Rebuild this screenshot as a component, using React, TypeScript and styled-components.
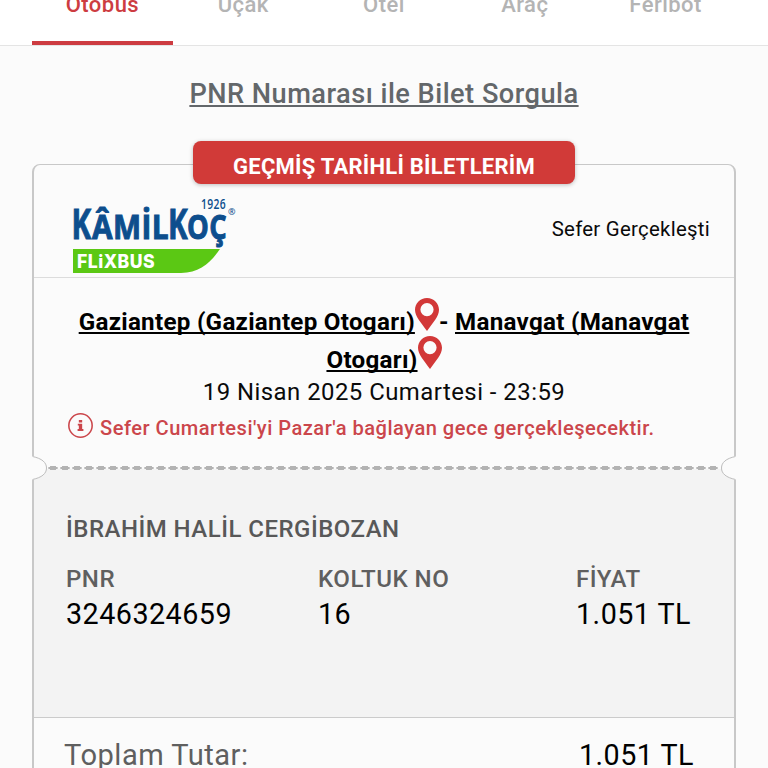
import React from 'react';
import styled, { createGlobalStyle } from 'styled-components';

const tabs = ['Otobüs', 'Uçak', 'Otel', 'Araç', 'Feribot'];

const PinIcon = () => (
  <StyledPin viewBox="0 0 24 33">
    <path
      fillRule="evenodd"
      d="M12 0C5.2 0 0 5.2 0 11.8C0 18.5 6 24.5 12 33C18 24.5 24 18.5 24 11.8C24 5.2 18.8 0 12 0ZM12 5A6.6 6.6 0 1 1 12 18.2A6.6 6.6 0 1 1 12 5Z"
    />
  </StyledPin>
);

const InfoIcon = () => (
  <StyledInfo viewBox="0 0 24 24">
    <circle cx="12" cy="12" r="11.2" />
    <path d="M10.4 6.600H13.600V9H10.400ZM9.400 10.200H13.600V15.400H14.800V17.200H9.200V15.400H10.400V11.900H9.400Z" />
  </StyledInfo>
);

const Logo = () => (
  <StyledLogo viewBox="0 0 164 78">
    <g fill="#0d4e8d" stroke="#0d4e8d" fontFamily="'Open Sans', sans-serif" fontWeight="700">
      <g strokeWidth="1">
        <text x="-1.500" y="43" fontSize="41" textLength="20" lengthAdjust="spacingAndGlyphs">K</text>
        <text x="19" y="43" fontSize="34" textLength="77" lengthAdjust="spacingAndGlyphs">ÂMİL</text>
        <text x="95" y="43" fontSize="41" textLength="20" lengthAdjust="spacingAndGlyphs">K</text>
        <text x="114" y="43" fontSize="34" textLength="40" lengthAdjust="spacingAndGlyphs">OÇ</text>
      </g>
      <text x="128" y="12.500" fontSize="14.500" fontWeight="600" strokeWidth="0" textLength="25" lengthAdjust="spacingAndGlyphs">1926</text>
      <text x="155" y="18.500" fontSize="9" fontWeight="600" strokeWidth="0">®</text>
    </g>
    <path fill="#5bc814" d="M0 53H147C138 66 127 77 108 77H0Z" />
    <text x="4" y="71.500" fill="#fff" fontFamily="Inter, sans-serif" fontWeight="800" fontSize="18.500" textLength="78" lengthAdjust="spacingAndGlyphs">FLiXBUS</text>
  </StyledLogo>
);

const Notch = ({ side }: { side: 'left' | 'right' }) => (
  <StyledNotch $side={side} viewBox="0 0 16 24">
    <path d="M0 0.500H1.500C10 2.500 14.500 6.500 14.500 12C14.500 17.500 10 21.500 1.500 23.500H0Z" fill="#fbfbfb" />
    <path d="M0.500 0.500C10 2.500 14.500 6.500 14.500 12C14.500 17.500 10 21.500 0.500 23.500" fill="none" stroke="#bdbdbd" />
  </StyledNotch>
);

const App = () => (
  <Page>
    <GlobalStyle />
    <TabBar>
      {tabs.map((tab, index) => (
        <Tab key={tab} $active={index === 0}>
          {tab}
        </Tab>
      ))}
    </TabBar>
    <PnrLink>PNR Numarası ile Bilet Sorgula</PnrLink>
    <Ticket>
      <Badge>GEÇMİŞ TARİHLİ BİLETLERİM</Badge>
      <TicketHeader>
        <Logo />
        <Status>Sefer Gerçekleşti</Status>
      </TicketHeader>
      <Journey>
        <Route>
          <u>Gaziantep (Gaziantep Otogarı)</u>
          <PinIcon />- <u>Manavgat (Manavgat</u>
          <br />
          <u>Otogarı)</u>
          <PinIcon />
        </Route>
        <DateLine>19 Nisan 2025 Cumartesi - 23:59</DateLine>
        <Warning>
          <InfoIcon />
          <span>Sefer Cumartesi'yi Pazar'a bağlayan gece gerçekleşecektir.</span>
        </Warning>
      </Journey>
      <Tear>
        <Notch side="left" />
        <Dashes />
        <Notch side="right" />
      </Tear>
      <Passenger>
        <Name>İBRAHİM HALİL CERGİBOZAN</Name>
        <Details>
          <Field>
            <Label>PNR</Label>
            <Value>3246324659</Value>
          </Field>
          <Field>
            <Label>KOLTUK NO</Label>
            <Value>16</Value>
          </Field>
          <Field>
            <Label>FİYAT</Label>
            <Value>1.051 TL</Value>
          </Field>
        </Details>
      </Passenger>
      <Total>
        <TotalLabel>Toplam Tutar:</TotalLabel>
        <Value>1.051 TL</Value>
      </Total>
    </Ticket>
  </Page>
);

export default App;

// css

const GlobalStyle = createGlobalStyle`
  * {
    box-sizing: border-box;
  }

  body {
    margin: 0;
    overflow: hidden;

    background: #fbfbfb;

    font-family: Roboto, sans-serif;
  }
`;

const Page = styled.div`
  height: 768px;
  overflow: hidden;

  color: #0a0a0a;
  letter-spacing: 0.03em;
`;

const TabBar = styled.nav`
  display: grid;
  grid-template-columns: repeat(5, 1fr);
  height: 46px;
  border-bottom: 1px solid #e4e4e4;
  padding: 0 32px;

  background: #fff;
`;

const Tab = styled.div<{ $active: boolean }>`
  height: 45px;
  border-bottom: 4px solid ${({ $active }) => ($active ? '#cd3c41' : 'transparent')};

  color: ${({ $active }) => ($active ? '#cd3c41' : '#b4b4b4')};
  font-weight: 500;
  font-size: 22px;
  line-height: 10px;
  text-align: center;
`;

const PnrLink = styled.div`
  margin-top: 32px;

  color: #63676a;
  font-weight: 500;
  font-size: 27.2px;
  line-height: 32px;
  text-align: center;
  text-decoration: underline;
  text-decoration-thickness: 1.5px;
  text-underline-offset: 2px;
  text-decoration-skip-ink: none;
`;

const Ticket = styled.section`
  position: relative;
  height: 700px;
  margin: 54px 32px 0;
  border: solid #c8c8c8;
  border-width: 1px 2px;
  border-radius: 8px;
`;

const Badge = styled.div`
  position: absolute;
  top: -24px;
  left: 159px;
  width: 382px;
  height: 43px;
  border-radius: 8px;
  box-shadow: 0 1px 4px rgba(0, 0, 0, 0.25);

  background: #d13a38;

  color: #fff;
  font-weight: 700;
  font-size: 22px;
  line-height: 52px;
  letter-spacing: 0.25px;
  text-align: center;
`;

const TicketHeader = styled.header`
  display: flex;
  justify-content: space-between;
  height: 113px;
  border-bottom: 1px solid #dcdcdc;
  padding: 31px 24px 0 39px;
`;

const Status = styled.span`
  margin-top: 20px;

  font-size: 20.4px;
  line-height: 26px;
  letter-spacing: 0.27px;
`;

const Journey = styled.div`
  height: 178px;
  padding: 25px 0 0;

  text-align: center;
`;

const Route = styled.div`
  color: #000;
  font-weight: 700;
  font-size: 24.2px;
  line-height: 38px;
  letter-spacing: 0.27px;

  u {
    text-decoration-thickness: 1.5px;
    text-underline-offset: 2px;
    text-decoration-skip-ink: none;
  }
`;

const DateLine = styled.div`
  margin-top: -1px;

  font-size: 23.9px;
  line-height: 28px;
`;

const Warning = styled.div`
  display: flex;
  gap: 7px;
  margin-top: 8px;
  padding-left: 34px;

  color: #cb464b;
  font-weight: 500;
  font-size: 20.1px;
  line-height: 29px;
  white-space: nowrap;
`;

const Tear = styled.div`
  display: flex;
  align-items: center;
  height: 24px;
  margin: 0 -2px;

  background: linear-gradient(#fbfbfb 13px, #f3f3f3 13px);
`;

const Dashes = styled.div`
  flex: 1;
  height: 4px;

  background: radial-gradient(ellipse 5px 2px at 6px 2px, #b3b3b3 90%, transparent) -1px 0 / 12px 4px;
`;

const Passenger = styled.div`
  height: 238px;
  border-bottom: 1px solid #cbcbcb;
  padding: 34px 32px 0;

  background: #f3f3f3;
`;

const Name = styled.div`
  color: #585858;
  font-weight: 500;
  font-size: 24px;
  line-height: 30px;
`;

const Details = styled.div`
  display: grid;
  grid-template-columns: 252px 258px auto;
  margin-top: 20px;
`;

const Field = styled.div`
  display: grid;
  justify-items: start;
`;

const Label = styled.div`
  color: #5f5f5f;
  font-weight: 500;
  font-size: 24.1px;
  line-height: 30px;
`;

const Value = styled.div`
  color: #000;
  font-size: 28.7px;
  line-height: 41px;
`;

const Total = styled.footer`
  display: flex;
  justify-content: space-between;
  padding: 17px 40px 0 30px;
`;

const TotalLabel = styled(Value)`
  color: #5f5f5f;
  font-size: 29.1px;
`;

const StyledPin = styled.svg`
  width: 24px;
  height: 33px;
  margin: -10px 0 0;

  fill: #d23838;
  vertical-align: -1px;
`;

const StyledInfo = styled.svg`
  flex: none;
  width: 25px;
  height: 25px;
  margin-top: -1px;

  fill: #cb464b;

  circle {
    fill: none;
    stroke: #cb464b;
    stroke-width: 1.5;
  }
`;

const StyledLogo = styled.svg`
  width: 164px;
  height: 78px;
  overflow: visible;
`;

const StyledNotch = styled.svg<{ $side: 'left' | 'right' }>`
  flex: none;
  width: 16px;
  height: 24px;
  transform: ${({ $side }) => ($side === 'right' ? 'scaleX(-1)' : 'none')};
`;
